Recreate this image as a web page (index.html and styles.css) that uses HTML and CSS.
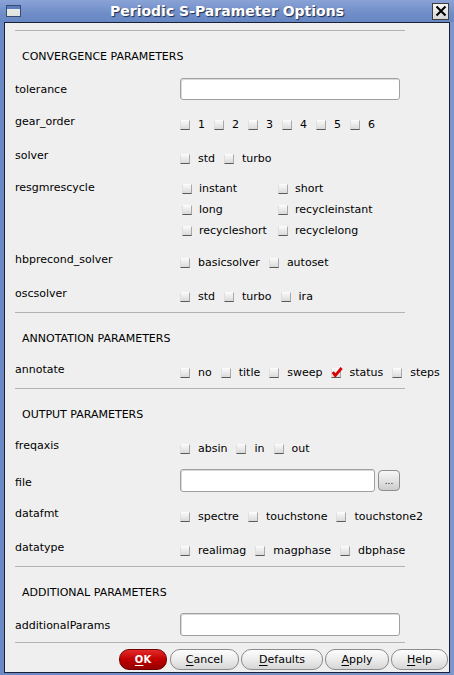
FILE: index.html
```html
<!DOCTYPE html>
<html>
<head>
<meta charset="utf-8">
<title>Periodic S-Parameter Options</title>
<link rel="stylesheet" href="styles.css">
</head>
<body>
<div class="window">
  <div class="titlebar">
    <span class="win-icon"></span>
    <span class="title">Periodic S-Parameter Options</span>
    <span class="close"><svg width="12" height="12" viewBox="0 0 12 12"><path d="M1.5 1.5L10.5 10.5M10.5 1.5L1.5 10.5" stroke="#000" stroke-width="2" fill="none"/></svg></span>
  </div>
  <div class="frame">
    <div class="content">
      <div class="sep first"></div>
      <div class="heading pb15">CONVERGENCE PARAMETERS</div>

      <div class="row h36"><span class="label lm4">tolerance</span><span class="input w220"></span></div>
      <div class="row h34"><span class="label">gear_order</span>
        <div class="cbs">
          <span class="cb"><span class="box"></span>1</span>
          <span class="cb"><span class="box"></span>2</span>
          <span class="cb"><span class="box"></span>3</span>
          <span class="cb"><span class="box"></span>4</span>
          <span class="cb"><span class="box"></span>5</span>
          <span class="cb"><span class="box"></span>6</span>
        </div>
      </div>
      <div class="row h32"><span class="label">solver</span>
        <div class="cbs">
          <span class="cb"><span class="box"></span>std</span>
          <span class="cb"><span class="box"></span>turbo</span>
        </div>
      </div>
      <div class="row h72"><span class="label">resgmrescycle</span>
        <div class="grid2">
          <span class="cb"><span class="box"></span>instant</span>
          <span class="cb"><span class="box"></span>short</span>
          <span class="cb"><span class="box"></span>long</span>
          <span class="cb"><span class="box"></span>recycleinstant</span>
          <span class="cb"><span class="box"></span>recycleshort</span>
          <span class="cb"><span class="box"></span>recyclelong</span>
        </div>
      </div>
      <div class="row h34"><span class="label">hbprecond_solver</span>
        <div class="cbs">
          <span class="cb"><span class="box"></span>basicsolver</span>
          <span class="cb"><span class="box"></span>autoset</span>
        </div>
      </div>
      <div class="row h26"><span class="label">oscsolver</span>
        <div class="cbs">
          <span class="cb"><span class="box"></span>std</span>
          <span class="cb"><span class="box"></span>turbo</span>
          <span class="cb"><span class="box"></span>ira</span>
        </div>
      </div>

      <div class="sep"></div>
      <div class="heading">ANNOTATION PARAMETERS</div>
      <div class="row h26"><span class="label">annotate</span>
        <div class="cbs">
          <span class="cb"><span class="box"></span>no</span>
          <span class="cb"><span class="box"></span>title</span>
          <span class="cb"><span class="box"></span>sweep</span>
          <span class="cb"><span class="box checked"><svg width="12" height="12" viewBox="0 0 12 12"><path d="M1.8 6.2L4.3 9.6L10.6 2" stroke="#d80000" stroke-width="2.8" fill="none"/></svg></span>status</span>
          <span class="cb"><span class="box"></span>steps</span>
        </div>
      </div>

      <div class="sep"></div>
      <div class="heading">OUTPUT PARAMETERS</div>
      <div class="row h31"><span class="label">freqaxis</span>
        <div class="cbs">
          <span class="cb"><span class="box"></span>absin</span>
          <span class="cb"><span class="box"></span>in</span>
          <span class="cb"><span class="box"></span>out</span>
        </div>
      </div>
      <div class="row h37"><span class="label lm6">file</span><span class="input w195"></span><span class="browse">...</span></div>
      <div class="row h34"><span class="label">datafmt</span>
        <div class="cbs">
          <span class="cb"><span class="box"></span>spectre</span>
          <span class="cb"><span class="box"></span>touchstone</span>
          <span class="cb"><span class="box"></span>touchstone2</span>
        </div>
      </div>
      <div class="row h26"><span class="label">datatype</span>
        <div class="cbs">
          <span class="cb"><span class="box"></span>realimag</span>
          <span class="cb"><span class="box"></span>magphase</span>
          <span class="cb"><span class="box"></span>dbphase</span>
        </div>
      </div>

      <div class="sep"></div>
      <div class="heading pb14">ADDITIONAL PARAMETERS</div>
      <div class="row h29"><span class="label lm5">additionalParams</span><span class="input w220 tall"></span></div>

      <div class="sep"></div>
      <div class="buttons">
        <span class="btn ok"><u>O</u>K</span>
        <span class="btn cancel"><u>C</u>ancel</span>
        <span class="btn defaults"><u>D</u>efaults</span>
        <span class="btn apply"><u>A</u>pply</span>
        <span class="btn help"><u>H</u>elp</span>
      </div>
    </div>
  </div>
</div>
</body>
</html>
```
FILE: styles.css
```css
* { box-sizing: border-box; }
html, body { margin: 0; padding: 0; }
body {
  width: 454px;
  height: 675px;
  overflow: hidden;
  font-family: "DejaVu Sans", "Liberation Sans", sans-serif;
  font-size: 11px;
  color: #000;
  background: #6f8dc7;
}
.window {
  width: 454px;
  height: 675px;
  display: flex;
  flex-direction: column;
  background: linear-gradient(to right, #6a89c5, #7a96cc);
}
.titlebar {
  height: 22px;
  flex: none;
  display: grid;
  grid-template-columns: 1fr auto 1fr;
  align-items: center;
  background: linear-gradient(#8aa3d6, #6f8dc8 60%, #6787c4);
}
.win-icon {
  justify-self: start;
  margin-left: 6px;
  width: 15px;
  height: 12px;
  border: 1px solid #3a4b72;
  background: linear-gradient(#5b7cbd 0, #5b7cbd 3px, #e6e9e6 3px, #dfe3dd 100%);
}
.title {
  color: #fff;
  font-weight: bold;
  font-size: 14px;
  line-height: 18px;
  white-space: nowrap;
  text-shadow: 1px 1px 1px #1e2d52;
}
.close {
  justify-self: end;
  margin-right: 5px;
  width: 17px;
  height: 17px;
  border: 1px solid #3d3d3d;
  background: linear-gradient(#f6f6f6, #d6d6d6);
  display: flex;
  align-items: center;
  justify-content: center;
}
.close svg { display: block; }
.frame {
  flex: 1;
  display: flex;
  padding: 0 4px 2px 4px;
}
.content {
  flex: 1;
  display: flex;
  flex-direction: column;
  border: 1px solid #1a2136;
  background: #efefef;
}
.sep {
  flex: none;
  height: 1px;
  width: 390px;
  margin-left: 10px;
  background: #b3b3b3;
}
.sep.first { margin-top: 7px; }
.heading {
  flex: none;
  padding: 19px 0 16px 17px;
  line-height: 14px;
}
.heading.pb15 { padding-bottom: 14px; }
.heading.pb14 { padding-bottom: 13px; }

.row {
  flex: none;
  display: flex;
  align-items: flex-start;
  padding-left: 10px;
}
.h26 { height: 26px; }
.h29 { height: 29px; }
.h31 { height: 31px; }
.h32 { height: 32px; }
.h34 { height: 34px; }
.h36 { height: 36px; }
.h37 { height: 37px; }
.h72 { height: 72px; }

.label {
  flex: none;
  width: 165px;
  line-height: 14px;
  padding-top: 1px;
  white-space: nowrap;
}
.lm4 { margin-top: 4px; }
.lm5 { margin-top: 5px; }
.lm6 { margin-top: 6px; }

.cbs {
  display: flex;
  gap: 9px;
  margin-top: 4px;
  line-height: 14px;
}
.grid2 {
  display: grid;
  grid-template-columns: 96px 96px;
  grid-auto-rows: 14px;
  row-gap: 7px;
  margin-top: 2px;
  padding-left: 2px;
  line-height: 14px;
}
.cb {
  display: inline-flex;
  align-items: center;
  white-space: nowrap;
}
.box {
  flex: none;
  width: 10px;
  height: 10px;
  margin-right: 8px;
  margin-top: -1px;
  border: 1px solid;
  border-color: #fbfbfb #a8a8a8 #5a5a5a #dedede;
  background: linear-gradient(#f8f8f8, #dadada);
  position: relative;
}
.grid2 .box { margin-right: 7px; }
.box.checked svg {
  position: absolute;
  left: -1px;
  top: -3px;
}

.input {
  display: block;
  height: 22px;
  background: #fff;
  border: 1px solid #a0a0a0;
  border-radius: 3px;
  box-shadow: inset 1px 1px 0 #dadada;
}
.input.tall { height: 23px; }
.w220 { width: 220px; }
.w195 { width: 195px; height: 23px; }
.browse {
  width: 22px;
  height: 21px;
  margin-left: 3px;
  margin-top: 1px;
  border: 1px solid #8e8e8e;
  border-radius: 4px;
  background: linear-gradient(#f7f7f7, #e3e3e3 50%, #cdcdcd);
  font-size: 9px;
  line-height: 20px;
  text-align: center;
  color: #222;
}

.buttons {
  flex: none;
  display: flex;
  justify-content: flex-end;
  gap: 2px;
  padding-right: 1px;
  margin-top: 6px;
  height: 21px;
}
.btn {
  height: 21px;
  display: flex;
  align-items: center;
  justify-content: center;
  line-height: 14px;
  padding-top: 1px;
  border-radius: 10px;
  border: 1px solid #8b8b8b;
  background: linear-gradient(#fdfdfd, #ececec 50%, #d6d6d6);
  color: #000;
}
.btn u { text-decoration: underline; text-underline-offset: 2px; }
.btn.ok {
  width: 48px;
  color: #fff;
  font-weight: bold;
  font-size: 10px;
  border-color: #700000;
  background: linear-gradient(#e42a2a, #c00000 50%, #950000);
  margin-right: 1px;
}
.btn.cancel { width: 69px; }
.btn.defaults { width: 82px; }
.btn.apply { width: 64px; }
.btn.help { width: 57px; }
```
